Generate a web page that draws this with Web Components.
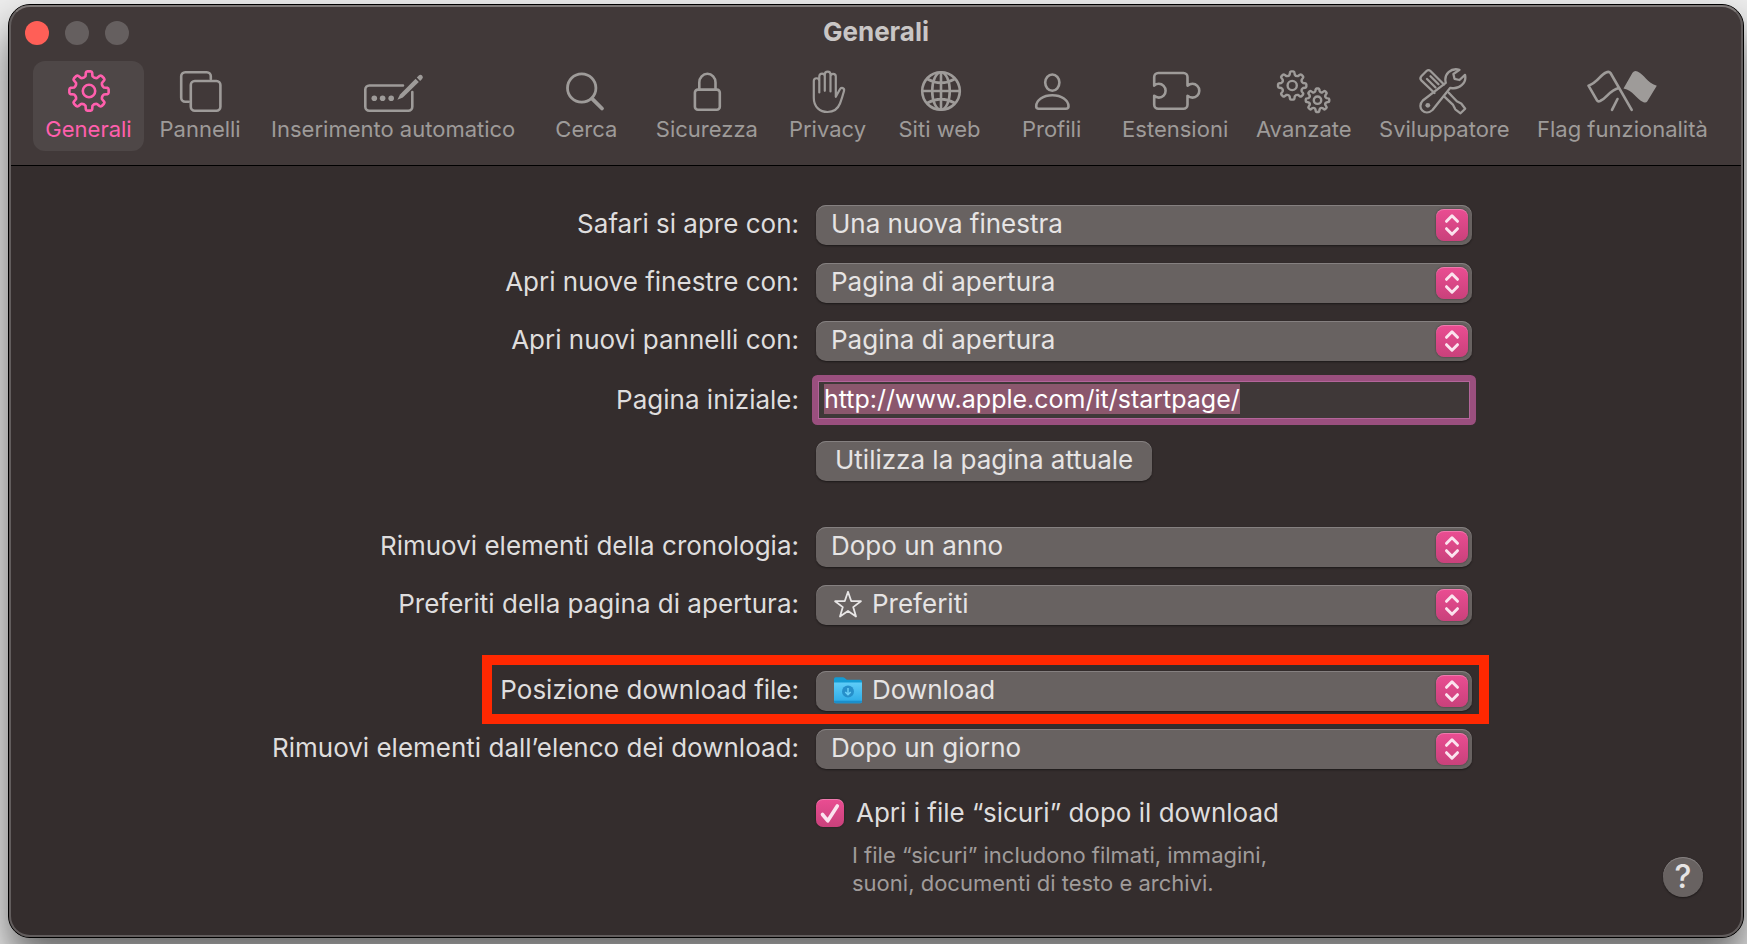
<!DOCTYPE html>
<html lang="it">
<head>
<meta charset="utf-8">
<meta name="viewport" content="width=device-width, initial-scale=1">
<title>Generali</title>
<style>
  :root {
    --bg-toolbar: #413939;
    --bg-body: #342d2d;
    --bg-control: #686261;
    --text-default: #dfdddd;
    --text-secondary: #a09c9b;
    --icon-default: #9e9b99;
    --accent-text: #ff5fad;
    --accent-top: #ea4d92;
    --accent-bottom: #c9417b;
    --focus-ring: #9a4f7e;
    --annotation: #ff2801;
  }

  * {
    box-sizing: border-box;
  }

  body {
    margin: 0;
    min-height: 100vh;
    padding: 4px 3px 6px 8px;
    display: flex;
    background: #ededed;
    color: var(--text-default);
    font: 400 26px/38px Inter, "Liberation Sans", sans-serif;
    overflow: hidden;
  }
</style>
</head>
<body>
  <pref-window heading="Generali">
    <pref-toolbar slot="toolbar">
      <toolbar-item icon="gear" selected>Generali</toolbar-item>
      <toolbar-item icon="tabs">Pannelli</toolbar-item>
      <toolbar-item icon="autofill">Inserimento automatico</toolbar-item>
      <toolbar-item icon="search">Cerca</toolbar-item>
      <toolbar-item icon="lock">Sicurezza</toolbar-item>
      <toolbar-item icon="hand">Privacy</toolbar-item>
      <toolbar-item icon="globe">Siti web</toolbar-item>
      <toolbar-item icon="person">Profili</toolbar-item>
      <toolbar-item icon="puzzle">Estensioni</toolbar-item>
      <toolbar-item icon="gears">Avanzate</toolbar-item>
      <toolbar-item icon="tools">Sviluppatore</toolbar-item>
      <toolbar-item icon="flags">Flag funzionalità</toolbar-item>
    </pref-toolbar>

    <pref-group>
      <pref-select label="Safari si apre con:" value="Una nuova finestra"></pref-select>
      <pref-select label="Apri nuove finestre con:" value="Pagina di apertura"></pref-select>
      <pref-select label="Apri nuovi pannelli con:" value="Pagina di apertura"></pref-select>
      <pref-field label="Pagina iniziale:" value="http://www.apple.com/it/startpage/"></pref-field>
      <pref-button>Utilizza la pagina attuale</pref-button>
    </pref-group>

    <pref-group>
      <pref-select label="Rimuovi elementi della cronologia:" value="Dopo un anno"></pref-select>
      <pref-select label="Preferiti della pagina di apertura:" value="Preferiti" icon="star"></pref-select>
    </pref-group>

    <pref-group>
      <pref-select label="Posizione download file:" value="Download" icon="folder" highlighted></pref-select>
      <pref-select label="Rimuovi elementi dall’elenco dei download:" value="Dopo un giorno"></pref-select>
      <pref-checkbox label="Apri i file “sicuri” dopo il download" checked>
        I file “sicuri” includono filmati, immagini,<br>suoni, documenti di testo e archivi.
      </pref-checkbox>
    </pref-group>

    <help-button slot="help"></help-button>
  </pref-window>

<script>
// Closed outline of a cog with eight teeth, the first one pointing up
function cog(cx, cy, outer, inner) {
  const at = (angle, r) => `${(cx + r * Math.sin(angle)).toFixed(2)} ${(cy - r * Math.cos(angle)).toFixed(2)}`;
  let d = '';
  for (let i = 0; i < 8; i++) {
    const a = i * Math.PI / 4;
    d += `${i ? 'L' : 'M'}${at(a - 0.23, inner)}L${at(a - 0.17, outer - 1)}Q${at(a - 0.15, outer)} ${at(a - 0.08, outer)}`;
    d += `L${at(a + 0.08, outer)}Q${at(a + 0.15, outer)} ${at(a + 0.17, outer - 1)}L${at(a + 0.23, inner)}`;
    d += `Q${at(a + Math.PI / 8, inner - 1.6)} ${at(a + Math.PI / 4 - 0.23, inner)}`;
  }
  return d + 'Z';
}

// Toolbar icons share a 72x48 canvas
const ICONS = {
  gear: `<path d="${cog(36, 24, 19.7, 15.2)}"/><circle cx="36" cy="24" r="6.2"/>`,
  tabs: `
    <path d="M46.8 12V9.2a4 4 0 0 0-4-4H21.2a4 4 0 0 0-4 4v21.6a4 4 0 0 0 4 4h3.5"/>
    <rect x="26.8" y="14" width="29.6" height="29.8" rx="4"/>`,
  autofill: `
    <path d="M46 18.5H12.3a4 4 0 0 0-4 4v17.2a4 4 0 0 0 4 4h39a4 4 0 0 0 4-4V25"/>
    <g fill="currentColor" stroke="none">
      <circle cx="17.3" cy="31.3" r="2.8"/><circle cx="25.6" cy="31.3" r="2.8"/><circle cx="34.2" cy="31.3" r="2.8"/>
      <path d="M40.4 32.8l2.6-5.4 15.6-15.6 3.2 3.2-15.9 15.6z"/>
      <path d="M59.8 10.6l2-2a2.3 2.3 0 0 1 3.3 3.3l-2 2z"/>
    </g>`,
  search: `<circle cx="31.7" cy="21" r="14.2" stroke-width="2.8"/><path stroke-width="3.8" d="M42.3 31.8l9.7 9.7"/>`,
  lock: `<rect x="23.9" y="22.6" width="24.9" height="20.2" rx="3"/><path d="M28.3 22.6v-7.2a8.1 8.6 0 0 1 16.2 0v7.2"/>`,
  hand: `
    <path stroke-width="2.2" d="M28.3 25.5V14a2.75 2.75 0 0 0-5.5 0v17C22.8 40 29 45 36.5 45c6.5 0 10.5-3.5 12.5-8.5 1.5-4 2.5-7 4-12.5.8-3-2.7-4.2-4.2-1.5l-4 7.3V9.5a2.65 2.65 0 0 0-5.3 0v15M28.3 14V9.3a2.75 2.75 0 0 1 5.5 0v14.5M33.8 9.3V7.5a2.85 2.85 0 0 1 5.7 0v2"/>`,
  globe: `
    <circle cx="37" cy="24" r="18.8"/><ellipse cx="37" cy="24" rx="8.8" ry="18.8"/>
    <path d="M37 5.2v37.6M18.2 24h37.6M23.3 12Q37 19.8 50.7 12M23.3 36Q37 28.2 50.7 36"/>`,
  person: `
    <ellipse cx="36.3" cy="15.6" rx="7.1" ry="8.1"/>
    <path d="M20.2 39.3c0-6 6.8-11 16.1-11s16.2 5 16.2 11q0 2.5-2.6 2.5H22.8q-2.6 0-2.6-2.5z"/>`,
  puzzle: `
    <path d="M15.2 18.6V10a4 4 0 0 1 4-4h25.3a4 4 0 0 1 4 4v8.6c1.8-1.4 3-1.8 5-1.8a6.8 6.9 0 0 1 0 13.8c-2 0-3.2-.4-5-1.8v9a4 4 0 0 1-4 4H19.2a4 4 0 0 1-4-4v-9c1.6 1.4 2.8 1.8 4.6 1.8a6.8 6.9 0 0 0 0-13.8c-1.8 0-3 .4-4.6 1.8z"/>`,
  gears: `
    <g stroke-width="2.4">
      <path d="${cog(24.2, 18.5, 14.2, 11.2)}"/><circle cx="24.2" cy="18.5" r="4.6"/>
      <path d="${cog(49.5, 33.2, 11.8, 9.3)}"/><circle cx="49.5" cy="33.2" r="3.7"/>
    </g>`,
  tools: `
    <g stroke-width="2.3">
      <path d="M26.5 26L13.3 13.3q-1.8-2 0-4L18.5 4q2-1.8 4 0L36 17.5M19 12l8.5 8.5M22.5 9.3l8 8"/>
      <path d="M40.5 25.5l8.3 8.8 4.4 2.2 4 5.2-4.7 4.6-5.2-4-2.2-4.4-9-8.6"/>
      <path d="M51.5 2.8C43 .5 35.5 7 37.8 15.8l-23 17.7C8 40.5 17 50 24.5 43l17.8-22.2C51 23 59 16 57 7.8L51.5 13l-5-1.2L45.4 7z"/>
    </g>
    <circle cx="19.8" cy="38.3" r="2.4" fill="currentColor" stroke="none"/>`,
  flags: `
    <path d="M45.7 42.8L24.5 6Q23 4 20 5.5C14 8 12 15.5 2.5 18.7L11 33.3q1 1.7 3.5.5C21 31 23 23.5 33 21M31.5 32L26 42.8"/>
    <path fill="currentColor" stroke="none" d="M46.5 5.8Q48.5 3 51.5 4.5C59 8 60 15 70.8 18.7l-9.6 15.8q-1.200 1.700-3.700.7C49.500 31.500 47.500 23.500 37.500 21.500z"/>`
};

// Icons drawn inside a pop-up button, on a 28x28 canvas
const ITEM_ICONS = {
  star: `<path fill="none" stroke="#e8e6e6" stroke-width="1.8" stroke-linejoin="round" d="M14 .8l3.200 9.200 9.700.2-7.700 5.900 2.800 9.400-8-5.600-8 5.600 2.800-9.400-7.700-5.900 9.700-.2z"/>`,
  folder: `
    <defs>
      <linearGradient id="front" x2="0" y2="1"><stop stop-color="#5fcdf8"/><stop offset="1" stop-color="#2aa9e6"/></linearGradient>
    </defs>
    <path fill="#149bd3" d="M0 2Q0 .3 1.700.3h7.200q1 0 1.800.7l1.500 1.300q.7.5 1.600.5h12.500Q28 2.800 28 4.500v4H0z"/>
    <path fill="url(#front)" d="M0 5.500h28v19q0 1.700-1.700 1.700H1.700Q0 26.200 0 24.500z"/>
    <path fill="#1c8fcb" d="M0 23.800h28v.7q0 1.700-1.700 1.700H1.700Q0 26.200 0 24.500z"/>
    <circle cx="14" cy="14.500" r="6" fill="#268fca"/>
    <path fill="none" stroke="#6cd0f8" stroke-width="1.5" d="M14 11v6.500m-2.700-2.500l2.700 2.700 2.700-2.700"/>`
};

// Every row has the same three columns: label, control, free space
const ROW_CSS = `
  * { box-sizing: border-box; }
  :host {
    display: grid;
    grid-template-columns: 790fr 656fr 254fr;
    column-gap: 17px;
    position: relative;
  }
  label { text-align: right; white-space: nowrap; justify-self: end; }
`;

class PrefWindow extends HTMLElement {
  constructor() {
    super();
    this.attachShadow({ mode: 'open' });
  }

  connectedCallback() {
    this.shadowRoot.innerHTML = `
      <style>
        * { box-sizing: border-box; }
        :host {
          flex: 1;
          min-width: 0;
          display: flex;
          flex-direction: column;
          position: relative;
          border: 1px solid #000;
          border-radius: 22px;
          background: var(--bg-body);
          box-shadow: 0 24px 40px rgba(0, 0, 0, .56);
        }
        /* light rim inside the black hairline */
        :host::after {
          content: "";
          position: absolute;
          inset: 0;
          border: 2px solid #625d5d;
          border-top-color: #7d7877;
          border-radius: 21px;
          pointer-events: none;
        }
        header {
          background: var(--bg-toolbar);
          border-bottom: 1px solid #000;
          border-radius: 21px 21px 0 0;
        }
        .titlebar {
          display: grid;
          grid-template-columns: 1fr auto 1fr;
          height: 56px;
          padding: 0 16px;
        }
        .lights { display: flex; gap: 16px; padding-top: 16px; }
        .lights button {
          width: 24px;
          height: 24px;
          padding: 0;
          border: 0;
          border-radius: 50%;
          background: #655f5f;
        }
        .lights .close { background: #ff5f57; }
        h1 {
          margin: 0;
          font-size: 26px;
          font-weight: 700;
          line-height: 54px;
          color: #c9c6c5;
        }
        main { flex: 1; display: grid; }
        form { grid-area: 1 / 1; }
        form {
          display: flex;
          flex-direction: column;
          gap: 46px;
          padding: 39px 0 35px;
        }
        ::slotted(help-button) {
          grid-area: 1 / 1;
          place-self: end;
          margin: 0 40px 40px 0;
        }
      </style>
      <header>
        <div class="titlebar">
          <div class="lights">
            <button class="close" aria-label="Chiudi"></button>
            <button aria-label="Riduci" disabled></button>
            <button aria-label="Ingrandisci" disabled></button>
          </div>
          <h1>${this.getAttribute('heading')}</h1>
        </div>
        <slot name="toolbar"></slot>
      </header>
      <main>
        <form><slot></slot></form>
        <slot name="help"></slot>
      </main>
    `;
  }
}

class PrefToolbar extends HTMLElement {
  constructor() {
    super();
    this.attachShadow({ mode: 'open' }).innerHTML = `
      <style>
        :host { display: block; }
        nav {
          display: grid;
          grid-template-columns: 111fr 112fr 274fr 112fr 129fr 112fr 112fr 112fr 135fr 122fr 159fr 197fr;
          padding: 0 22px 14px 24px;
        }
      </style>
      <nav><slot></slot></nav>
    `;
  }
}

class ToolbarItem extends HTMLElement {
  constructor() {
    super();
    this.attachShadow({ mode: 'open' });
  }

  connectedCallback() {
    this.shadowRoot.innerHTML = `
      <style>
        :host { display: block; min-width: 0; color: var(--icon-default); }
        :host([selected]) { color: var(--accent-text); }
        button {
          display: flex;
          flex-direction: column;
          align-items: center;
          width: 100%;
          padding: 6px 0 8px;
          border: 0;
          border-radius: 12px;
          background: none;
          color: inherit;
          font: inherit;
          font-size: 22px;
          line-height: 28px;
          white-space: nowrap;
        }
        :host([selected]) button { background: #4e4747; }
        svg {
          width: 72px;
          height: 48px;
          fill: none;
          stroke: currentColor;
          stroke-width: 2.6;
          stroke-linecap: round;
          stroke-linejoin: round;
        }
      </style>
      <button type="button">
        <svg viewBox="0 0 72 48" aria-hidden="true">${ICONS[this.getAttribute('icon')]}</svg>
        <span><slot></slot></span>
      </button>
    `;
  }
}

class PrefGroup extends HTMLElement {
  constructor() {
    super();
    this.attachShadow({ mode: 'open' }).innerHTML = `
      <style>
        :host { display: flex; flex-direction: column; gap: 18px; }
      </style>
      <slot></slot>
    `;
  }
}

class PrefSelect extends HTMLElement {
  constructor() {
    super();
    this.attachShadow({ mode: 'open' });
  }

  connectedCallback() {
    const icon = this.getAttribute('icon');

    this.shadowRoot.innerHTML = `
      <style>
        ${ROW_CSS}
        .popup {
          display: grid;
          grid-template-columns: 28px 1fr 32px;
          align-items: center;
          height: 40px;
          padding: 0 4px 0 18px;
          border-radius: 10px;
          background: var(--bg-control);
          box-shadow: inset 0 1px #858080, 0 1px 2px rgba(0, 0, 0, .45);
        }
        select {
          grid-area: 1 / 1 / 2 / 4;
          height: 40px;
          margin: 0 -4px 0 -18px;
          padding: 0 40px 2px 15px;
          appearance: none;
          border: 0;
          outline: 0;
          background: none;
          color: #e6e4e4;
          font: inherit;
        }
        :host([icon]) select { padding-left: 56px; }
        .icon { grid-area: 1 / 1; width: 28px; height: 28px; pointer-events: none; }
        .arrows {
          grid-area: 1 / 3;
          width: 32px;
          height: 32px;
          border-radius: 8px;
          background: linear-gradient(var(--accent-top), var(--accent-bottom));
          box-shadow: inset 0 1px rgba(255, 255, 255, .25), 0 0 2px rgba(0, 0, 0, .5);
          pointer-events: none;
        }
        :host([highlighted])::after {
          content: "";
          position: absolute;
          inset: -16px 14.65% -13px 27.3%;
          border: 10px solid var(--annotation);
          pointer-events: none;
        }
      </style>
      <label for="popup">${this.getAttribute('label')}</label>
      <div class="popup">
        <select id="popup"><option>${this.getAttribute('value')}</option></select>
        ${icon ? `<svg class="icon" viewBox="0 0 28 28" aria-hidden="true">${ITEM_ICONS[icon]}</svg>` : ''}
        <svg class="arrows" viewBox="0 0 32 32" fill="none" stroke="#fbe3ee" stroke-width="3" stroke-linecap="round" stroke-linejoin="round" aria-hidden="true">
          <path d="M10.5 12.3l5.500-5.500 5.500 5.500M10.500 19.700l5.500 5.500 5.500-5.500"/>
        </svg>
      </div>
    `;
  }
}

class PrefField extends HTMLElement {
  constructor() {
    super();
    this.attachShadow({ mode: 'open' });
  }

  connectedCallback() {
    this.shadowRoot.innerHTML = `
      <style>
        ${ROW_CSS}
        :host { align-items: center; padding-bottom: 2px; }
        input {
          width: 100%;
          height: 42px;
          padding: 2px 6px 4px;
          border: 2px solid var(--focus-ring);
          border-radius: 2px;
          outline: 0;
          background: #3f3838;
          box-shadow: 0 0 0 4px var(--focus-ring), inset 0 0 0 1px #b3659a;
          color: #fff;
          font: inherit;
          font-size: 25px;
          line-height: 32px;
        }
        input::selection { background: #8b576d; color: #fff; }
      </style>
      <label for="field">${this.getAttribute('label')}</label>
      <input id="field" type="text" value="${this.getAttribute('value')}">
    `;
    const input = this.shadowRoot.querySelector('input');
    input.focus();
    input.select();
  }
}

class PrefButton extends HTMLElement {
  constructor() {
    super();
    this.attachShadow({ mode: 'open' }).innerHTML = `
      <style>
        ${ROW_CSS}
        button {
          grid-column: 2;
          justify-self: start;
          height: 40px;
          padding: 0 19px 2px;
          border: 0;
          border-radius: 10px;
          background: var(--bg-control);
          box-shadow: inset 0 1px #858080, 0 1px 2px rgba(0, 0, 0, .45);
          color: #e6e4e4;
          font: inherit;
          white-space: nowrap;
        }
      </style>
      <button type="button"><slot></slot></button>
    `;
  }
}

class PrefCheckbox extends HTMLElement {
  constructor() {
    super();
    this.attachShadow({ mode: 'open' });
  }

  connectedCallback() {
    this.shadowRoot.innerHTML = `
      <style>
        ${ROW_CSS}
        :host { padding-top: 12px; }
        .content { grid-column: 2; }
        .line { display: flex; gap: 12px; line-height: 28px; }
        .box { display: grid; width: 28px; height: 28px; }
        input {
          grid-area: 1 / 1;
          width: 28px;
          height: 28px;
          margin: 0;
          appearance: none;
          border-radius: 7px;
          background: linear-gradient(var(--accent-top), var(--accent-bottom));
          box-shadow: inset 0 1px rgba(255, 255, 255, .25), 0 0 2px rgba(0, 0, 0, .5);
        }
        svg { grid-area: 1 / 1; pointer-events: none; }
        input:not(:checked) + svg { visibility: hidden; }
        p {
          margin: 14px 0 0;
          padding-left: 36px;
          color: var(--text-secondary);
          font-size: 22px;
          line-height: 28px;
          white-space: nowrap;
        }
      </style>
      <div class="content">
        <div class="line">
          <span class="box">
            <input id="check" type="checkbox" ${this.hasAttribute('checked') ? 'checked' : ''}>
            <svg viewBox="0 0 28 28" fill="none" stroke="#fbe3ee" stroke-width="3.6" stroke-linecap="round" stroke-linejoin="round" aria-hidden="true">
              <path d="M6.5 15.5l5.3 6.3L21.3 7"/>
            </svg>
          </span>
          <label for="check">${this.getAttribute('label')}</label>
        </div>
        <p><slot></slot></p>
      </div>
    `;
  }
}

class HelpButton extends HTMLElement {
  constructor() {
    super();
    this.attachShadow({ mode: 'open' }).innerHTML = `
      <style>
        :host { display: block; }
        button {
          display: block;
          width: 40px;
          height: 40px;
          padding: 0;
          border: 0;
          border-radius: 50%;
          background: var(--bg-control);
          box-shadow: inset 0 1px #858080, 0 1px 2px rgba(0, 0, 0, .45);
          color: #e6e4e4;
          font: inherit;
          font-size: 32px;
          font-weight: 500;
          line-height: 40px;
        }
      </style>
      <button type="button" aria-label="Aiuto">?</button>
    `;
  }
}

customElements.define('pref-window', PrefWindow);
customElements.define('pref-toolbar', PrefToolbar);
customElements.define('toolbar-item', ToolbarItem);
customElements.define('pref-group', PrefGroup);
customElements.define('pref-select', PrefSelect);
customElements.define('pref-field', PrefField);
customElements.define('pref-button', PrefButton);
customElements.define('pref-checkbox', PrefCheckbox);
customElements.define('help-button', HelpButton);
</script>
</body>
</html>
